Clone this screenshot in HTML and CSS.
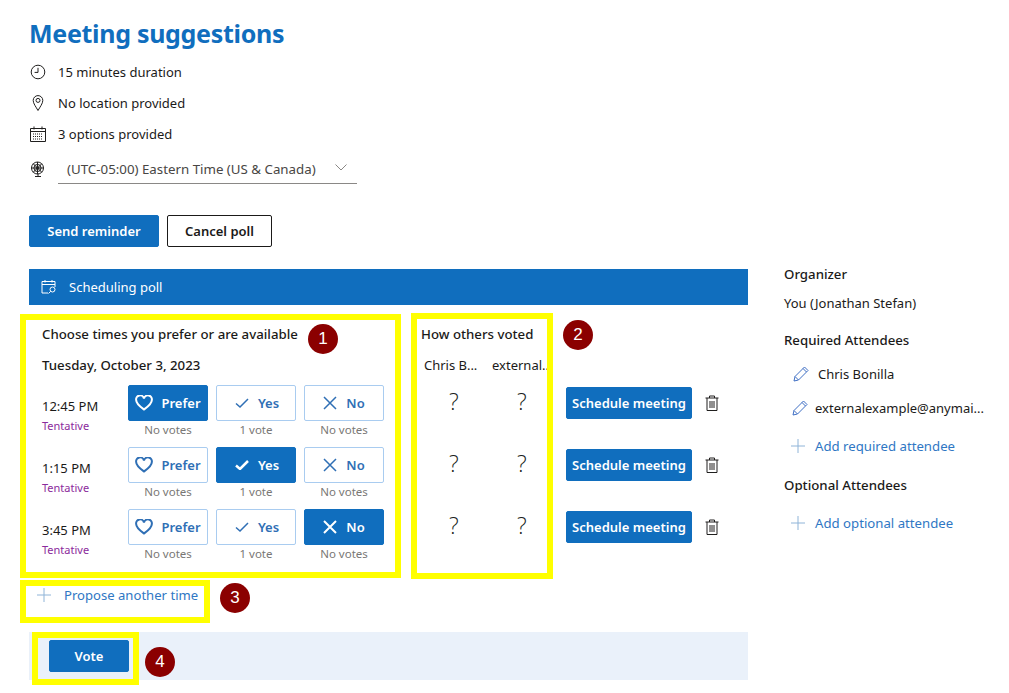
FILE: index.html
```html
<!DOCTYPE html>
<html lang="en">
<head>
    <meta charset="UTF-8">
    <title>Meeting suggestions</title>
    <link rel="stylesheet" href="styles.css">
</head>
<body>
    <div class="page">
        <h1 class="title">Meeting suggestions</h1>

        <div class="info">
            <svg class="info_icon" viewBox="0 0 16 16"><circle cx="8" cy="8" r="6.800"/><path d="M8 3.800V8.400H4.600"/></svg>
            <span>15 minutes duration</span>
        </div>
        <div class="info">
            <svg class="info_icon" viewBox="0 0 16 16"><path d="M8 15.500C6 12 3.200 8.500 3.200 5.400a4.800 4.800 0 0 1 9.600 0C12.800 8.500 10 12 8 15.500Z"/><circle cx="8" cy="5.400" r="2"/></svg>
            <span>No location provided</span>
        </div>
        <div class="info">
            <svg class="info_icon" viewBox="0 0 16 16"><path d="M.5 2.500H15.500V15.500H.5ZM.5 5.500H15.500M4 .5V3.500M12 .5V3.500"/><path class="dots" d="M3 8H13M3 10.500H13M3 13H13"/></svg>
            <span>3 options provided</span>
        </div>

        <div class="zone">
            <svg class="info_icon" viewBox="0 0 16 16"><circle cx="7.500" cy="7" r="6"/><circle cx="7.500" cy="7" r="3.600"/><circle cx="7.500" cy="7" r="1.400"/><path d="M1.500 7H13.500M7.500 1V13M3.200 2.700L11.800 11.300M11.800 2.700L3.200 11.300M8 13V15.500M5 15.500H11"/></svg>
            <div class="zone_select">
                <span>(UTC-05:00) Eastern Time (US &amp; Canada)</span>
                <svg class="chevron" viewBox="0 0 12 7"><path d="M.5.5L6 6 11.500.5"/></svg>
            </div>
        </div>

        <div class="top_btns">
            <button class="btn btn_primary btn_send">Send reminder</button>
            <button class="btn btn_outline">Cancel poll</button>
        </div>

        <div class="main">
            <div class="left">
                <div class="banner">
                    <svg class="banner_icon" viewBox="0 0 16 16"><path d="M7 14H1V2.500H14V8M1 5.500H14M4 1V3.500M11 1V3.500"/><circle cx="11.500" cy="10.500" r="2.500"/><path d="M9.700 12.300L7.500 14.500"/></svg>
                    <span>Scheduling poll</span>
                </div>

                <div class="poll">
                    <div class="choose">
                        <div class="heading">Choose times you prefer or are available</div>
                        <div class="date">Tuesday, October 3, 2023</div>

                        <div class="row">
                            <div class="slot"><div class="slot_time">12:45 PM</div><div class="slot_state">Tentative</div></div>
                            <div class="choice">
                                <button class="pick pick_on"><svg class="pick_heart" viewBox="0 0 18 16"><path d="M9 14.500C5 11.500 1.200 8.800 1.200 5.200A3.900 3.900 0 0 1 9 3.500 3.900 3.900 0 0 1 16.800 5.200C16.800 8.800 13 11.500 9 14.500Z"/></svg>Prefer</button>
                                <div class="count">No votes</div>
                            </div>
                            <div class="choice">
                                <button class="pick"><svg class="pick_check" viewBox="0 0 14 10"><path d="M1 5.500L5 9 13 1"/></svg>Yes</button>
                                <div class="count">1 vote</div>
                            </div>
                            <div class="choice">
                                <button class="pick"><svg class="pick_x" viewBox="0 0 14 14"><path d="M1 1L13 13M13 1L1 13"/></svg>No</button>
                                <div class="count">No votes</div>
                            </div>
                        </div>

                        <div class="row">
                            <div class="slot"><div class="slot_time">1:15 PM</div><div class="slot_state">Tentative</div></div>
                            <div class="choice">
                                <button class="pick"><svg class="pick_heart" viewBox="0 0 18 16"><path d="M9 14.500C5 11.500 1.200 8.800 1.200 5.200A3.900 3.900 0 0 1 9 3.500 3.900 3.900 0 0 1 16.800 5.200C16.800 8.800 13 11.500 9 14.500Z"/></svg>Prefer</button>
                                <div class="count">No votes</div>
                            </div>
                            <div class="choice">
                                <button class="pick pick_on"><svg class="pick_check" viewBox="0 0 14 10"><path d="M1 5.500L5 9 13 1"/></svg>Yes</button>
                                <div class="count">1 vote</div>
                            </div>
                            <div class="choice">
                                <button class="pick"><svg class="pick_x" viewBox="0 0 14 14"><path d="M1 1L13 13M13 1L1 13"/></svg>No</button>
                                <div class="count">No votes</div>
                            </div>
                        </div>

                        <div class="row">
                            <div class="slot"><div class="slot_time">3:45 PM</div><div class="slot_state">Tentative</div></div>
                            <div class="choice">
                                <button class="pick"><svg class="pick_heart" viewBox="0 0 18 16"><path d="M9 14.500C5 11.500 1.200 8.800 1.200 5.200A3.900 3.900 0 0 1 9 3.500 3.900 3.900 0 0 1 16.800 5.200C16.800 8.800 13 11.500 9 14.500Z"/></svg>Prefer</button>
                                <div class="count">No votes</div>
                            </div>
                            <div class="choice">
                                <button class="pick"><svg class="pick_check" viewBox="0 0 14 10"><path d="M1 5.500L5 9 13 1"/></svg>Yes</button>
                                <div class="count">1 vote</div>
                            </div>
                            <div class="choice">
                                <button class="pick pick_on"><svg class="pick_x" viewBox="0 0 14 14"><path d="M1 1L13 13M13 1L1 13"/></svg>No</button>
                                <div class="count">No votes</div>
                            </div>
                        </div>
                    </div>

                    <div class="others">
                        <div class="heading">How others voted</div>
                        <div class="names"><span>Chris B...</span><span>external...</span></div>
                        <div class="marks"><span>?</span><span>?</span></div>
                        <div class="marks"><span>?</span><span>?</span></div>
                        <div class="marks"><span>?</span><span>?</span></div>
                    </div>

                    <div class="actions">
                        <div class="action">
                            <button class="btn btn_primary btn_schedule">Schedule meeting</button>
                            <svg class="trash" viewBox="0 0 14 16"><path d="M.5 3H13.500M4.500 3V1H9.500V3M2 3V15.500H12V3M5 6V13M7 6V13M9 6V13"/></svg>
                        </div>
                        <div class="action">
                            <button class="btn btn_primary btn_schedule">Schedule meeting</button>
                            <svg class="trash" viewBox="0 0 14 16"><path d="M.5 3H13.500M4.500 3V1H9.500V3M2 3V15.500H12V3M5 6V13M7 6V13M9 6V13"/></svg>
                        </div>
                        <div class="action">
                            <button class="btn btn_primary btn_schedule">Schedule meeting</button>
                            <svg class="trash" viewBox="0 0 14 16"><path d="M.5 3H13.500M4.500 3V1H9.500V3M2 3V15.500H12V3M5 6V13M7 6V13M9 6V13"/></svg>
                        </div>
                    </div>
                </div>

                <div class="propose">
                    <svg class="plus" viewBox="0 0 14 14"><path d="M7 0V14M0 7H14"/></svg>
                    <span>Propose another time</span>
                </div>

                <div class="vote_bar">
                    <button class="btn btn_primary btn_vote">Vote</button>
                </div>
            </div>

            <div class="right">
                <div class="side_title">Organizer</div>
                <div class="organizer">You (Jonathan Stefan)</div>
                <div class="side_title side_required">Required Attendees</div>
                <div class="person person_first">
                    <svg class="pencil" viewBox="0 0 16 16"><path d="M1 15L2 10.500 11.500 1 15 4.500 5.500 14ZM2 10.500L5.500 14M10 2.500L13.500 6"/></svg>
                    <span>Chris Bonilla</span>
                </div>
                <div class="person">
                    <svg class="pencil" viewBox="0 0 16 16"><path d="M1 15L2 10.500 11.500 1 15 4.500 5.500 14ZM2 10.500L5.500 14M10 2.500L13.500 6"/></svg>
                    <span>externalexample@anymai...</span>
                </div>
                <div class="add add_required">
                    <svg class="plus" viewBox="0 0 14 14"><path d="M7 0V14M0 7H14"/></svg>
                    <span>Add required attendee</span>
                </div>
                <div class="side_title side_optional">Optional Attendees</div>
                <div class="add add_optional">
                    <svg class="plus" viewBox="0 0 14 14"><path d="M7 0V14M0 7H14"/></svg>
                    <span>Add optional attendee</span>
                </div>
            </div>
        </div>

        <!-- screenshot annotations -->
        <div class="mark_box mark_box1"></div>
        <div class="mark_box mark_box2"></div>
        <div class="mark_box mark_box3"></div>
        <div class="mark_box mark_box4"></div>
        <div class="badge badge1">1</div>
        <div class="badge badge2">2</div>
        <div class="badge badge3">3</div>
        <div class="badge badge4">4</div>
    </div>
</body>
</html>
```

FILE: styles.css
```css
*{
    box-sizing: border-box;
}

body{
    margin: 0;
    background-color: #fff;
    color: #1b1a19;
    font-family: "Noto Sans", "Open Sans", sans-serif;
    font-size: 13px;
}

svg{
    fill: none;
    stroke: currentColor;
    flex-shrink: 0;
}

button{
    font-family: inherit;
}

.page{
    position: relative;
    width: 1009px;
    height: 693px;
    padding: 16px 0 0 29px;
    overflow: hidden;
}

.title{
    margin: 0 0 5px 0;
    height: 35px;
    line-height: 35px;
    font-size: 25px;
    font-weight: 700;
    letter-spacing: -0.3px;
    color: #106ebe;
}

.info{
    display: flex;
    align-items: center;
    height: 31px;
    padding-left: 1px;
}

.info_icon{
    width: 16px;
    height: 16px;
    margin-right: 12px;
    stroke: #201f1e;
}

.info_icon .dots{
    stroke-dasharray: 1 1;
}

.zone{
    display: flex;
    align-items: center;
    margin-top: 5px;
    padding-left: 1px;
}

.zone_select{
    display: flex;
    align-items: center;
    justify-content: space-between;
    width: 299px;
    height: 30px;
    padding: 0 9px;
    border-bottom: 1px solid #8a8886;
    font-size: 13.300px;
    color: #484644;
}

.chevron{
    width: 12px;
    height: 7px;
    stroke: #8a8886;
    margin-right: 1px;
    margin-top: -3px;
}

.top_btns{
    display: flex;
    gap: 8px;
    margin-top: 31px;
}

.btn{
    height: 32px;
    border-radius: 2px;
    font-size: 13px;
    font-weight: 600;
    padding: 0;
    white-space: nowrap;
}

.btn_primary{
    background-color: #106ebe;
    border: 1px solid #106ebe;
    color: #fff;
}

.btn_outline{
    width: 105px;
    background-color: #fff;
    border: 1px solid #1b1a19;
    color: #1b1a19;
}

.btn_send{
    width: 130px;
}

.main{
    display: flex;
    margin-top: 22px;
}

.left{
    width: 719px;
}

.banner{
    display: flex;
    align-items: center;
    height: 36px;
    padding-left: 12px;
    background-color: #106ebe;
    color: #fff;
}

.banner_icon{
    width: 16px;
    height: 16px;
    margin-right: 12px;
}

.poll{
    display: flex;
    height: 275px;
}

.choose{
    width: 382px;
    padding: 20px 0 0 13px;
}

.heading{
    height: 18px;
    line-height: 18px;
    font-size: 13.250px;
    font-weight: 500;
}

.date{
    height: 18px;
    line-height: 18px;
    margin-top: 13px;
    margin-bottom: 11px;
    font-size: 13.250px;
    font-weight: 500;
}

.row{
    display: flex;
    height: 62px;
}

.slot{
    width: 86px;
    padding-top: 12px;
}

.slot_time{
    line-height: 18px;
}

.slot_state{
    margin-top: 3px;
    line-height: 15px;
    font-size: 11px;
    color: #8b2a9c;
}

.choice{
    width: 88px;
}

.pick{
    display: flex;
    align-items: center;
    justify-content: center;
    gap: 8px;
    width: 80px;
    height: 36px;
    padding: 0;
    background-color: #fff;
    border: 1px solid #a9ccf0;
    border-radius: 2px;
    color: #2f6fb5;
    font-size: 13px;
    font-weight: 600;
}

.pick_on{
    background-color: #106ebe;
    border-color: #106ebe;
    color: #fff;
}

.pick_heart{
    width: 18px;
    height: 16px;
    stroke-width: 2;
}

.pick_check{
    width: 14px;
    height: 10px;
    margin-left: 2px;
    margin-right: 1px;
    stroke-width: 1.500;
}

.pick_on .pick_check{
    stroke-width: 2.500;
}

.pick_x{
    width: 14px;
    height: 14px;
    margin-right: 1px;
    stroke-width: 1.500;
}

.pick_on .pick_x{
    stroke-width: 2;
}

.count{
    margin-top: 1px;
    text-align: center;
    width: 80px;
    line-height: 15px;
    font-size: 11.500px;
    color: #797775;
}

.others{
    width: 155px;
    padding: 20px 0 0 10px;
}

.names{
    display: flex;
    height: 18px;
    line-height: 18px;
    margin-top: 13px;
    margin-bottom: 12px;
    padding-left: 3px;
}

.names span{
    flex: none;
    width: 68px;
    white-space: nowrap;
}

.marks{
    display: flex;
    height: 62px;
    padding: 0 0 0 28px;
    font-family: "Open Sans", sans-serif;
    font-size: 23px;
    font-weight: 300;
    line-height: 30px;
    color: #201f1e;
}

.marks span{
    flex: none;
    width: 68px;
}

.actions{
    padding-top: 82px;
}

.action{
    display: flex;
    align-items: center;
    height: 62px;
    padding-bottom: 30px;
}

.btn_schedule{
    width: 126px;
    font-size: 13px;
}

.trash{
    width: 14px;
    height: 16px;
    margin-left: 13px;
    stroke: #201f1e;
}

.propose{
    display: flex;
    align-items: center;
    height: 18px;
    margin-left: 8px;
    margin-top: 6px;
    font-size: 13.100px;
    color: #2f77c4;
}

.plus{
    width: 14px;
    height: 14px;
    margin-right: 13px;
    stroke: #8fb4d8;
}

.vote_bar{
    margin-top: 28px;
    height: 48px;
    padding: 8px 0 0 20px;
    background-color: #eaf1fa;
}

.btn_vote{
    width: 80px;
}

.right{
    width: 200px;
    margin-left: 36px;
}

.side_title{
    height: 18px;
    line-height: 18px;
    margin-top: -4px;
    font-size: 13.250px;
    font-weight: 500;
}

.organizer{
    height: 18px;
    line-height: 18px;
    margin-top: 11px;
}

.side_required{
    margin-top: 19px;
}

.person{
    display: flex;
    align-items: center;
    height: 18px;
    margin-top: 16px;
    padding-left: 8px;
    white-space: nowrap;
}

.person_first{
    padding-left: 9px;
}

.person_first .pencil{
    margin-right: 9px;
}

.pencil{
    width: 16px;
    height: 16px;
    margin-right: 7px;
    stroke: #3f6fc4;
}

.add{
    display: flex;
    align-items: center;
    height: 18px;
    padding-left: 7px;
    font-size: 13.200px;
    color: #2f77c4;
}

.add .plus{
    margin-right: 10px;
}

.add_required{
    margin-top: 20px;
}

.side_optional{
    margin-top: 21px;
}

.add_optional{
    margin-top: 20px;
}

.mark_box{
    position: absolute;
    border: 6px solid #ff0;
}

.mark_box1{
    left: 20px;
    top: 314px;
    width: 381px;
    height: 264px;
}

.mark_box2{
    left: 411px;
    top: 313px;
    width: 142px;
    height: 266px;
}

.mark_box3{
    left: 20px;
    top: 580px;
    width: 190px;
    height: 43px;
}

.mark_box4{
    left: 32px;
    top: 632px;
    width: 107px;
    height: 53px;
}

.badge{
    position: absolute;
    width: 30px;
    height: 30px;
    line-height: 30px;
    border-radius: 50%;
    background-color: #8b0000;
    color: #fff;
    text-align: center;
    font-family: "Liberation Sans", sans-serif;
    font-size: 17px;
}

.badge1{
    left: 308px;
    top: 324px;
}

.badge2{
    left: 563px;
    top: 320px;
}

.badge3{
    left: 220px;
    top: 583px;
}

.badge4{
    left: 145px;
    top: 647px;
}
```
